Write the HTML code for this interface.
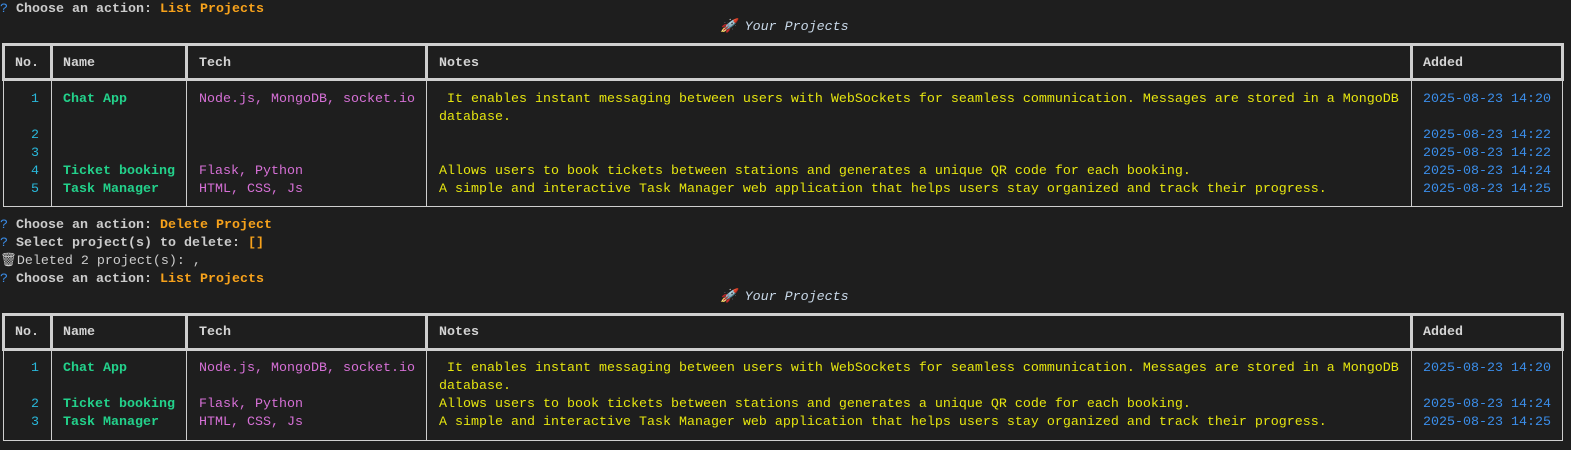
<!DOCTYPE html>
<html><head><meta charset="utf-8"><style>
body{margin:0;background:#1e1e1e;width:1571px;height:450px;overflow:hidden;position:relative;font-family:"Liberation Mono","DejaVu Sans Mono",monospace;font-size:13.33px;line-height:18px;color:#cccccc}
.t{position:absolute;white-space:pre;margin-top:2px}
.b{font-weight:bold}
.q{color:#3b8eea}
.o{color:#f7a21b;font-weight:bold}
.g{color:#23d18b;font-weight:bold}
.m{color:#d670d6}
.y{color:#e5e510}
.d{color:#3b8eea}
.n{color:#29b8db}
.h{font-weight:bold;color:#d4d4d4}
.ti{color:#c8d8e8;font-style:italic}
.hl{position:absolute;background:#cfcfcf}
.ln{position:absolute;background:#cfcfcf}
</style></head><body>

<div class="t" style="top:-1px;left:0"><span class="q">?</span> <span class="b">Choose an action:</span> <span class="o">List Projects</span></div>
<div class="t ti" style="top:17px;left:720px">🚀 Your Projects</div>

<div class="hl" style="left:2px;top:43px;width:1562px;height:3px"></div>
<div class="hl" style="left:2px;top:78px;width:1562px;height:3px"></div>
<div class="hl" style="left:2px;top:43px;width:3px;height:38px"></div>
<div class="hl" style="left:50px;top:43px;width:3px;height:38px"></div>
<div class="hl" style="left:185px;top:43px;width:3px;height:38px"></div>
<div class="hl" style="left:425px;top:43px;width:3px;height:38px"></div>
<div class="hl" style="left:1410px;top:43px;width:3px;height:38px"></div>
<div class="hl" style="left:1561px;top:43px;width:3px;height:38px"></div>
<div class="ln" style="left:3px;top:81px;width:1px;height:126px"></div>
<div class="ln" style="left:51px;top:81px;width:1px;height:126px"></div>
<div class="ln" style="left:186px;top:81px;width:1px;height:126px"></div>
<div class="ln" style="left:426px;top:81px;width:1px;height:126px"></div>
<div class="ln" style="left:1411px;top:81px;width:1px;height:126px"></div>
<div class="ln" style="left:1562px;top:81px;width:1px;height:126px"></div>
<div class="ln" style="left:3px;top:206px;width:1560px;height:1px"></div>

<div class="t h" style="top:53px;left:15px">No.</div>
<div class="t h" style="top:53px;left:63px">Name</div>
<div class="t h" style="top:53px;left:199px">Tech</div>
<div class="t h" style="top:53px;left:439px">Notes</div>
<div class="t h" style="top:53px;left:1423px">Added</div>

<div class="t n" style="top:89px;left:31px">1</div>
<div class="t g" style="top:89px;left:63px">Chat App</div>
<div class="t m" style="top:89px;left:199px">Node.js, MongoDB, socket.io</div>
<div class="t y" style="top:89px;left:439px"> It enables instant messaging between users with WebSockets for seamless communication. Messages are stored in a MongoDB
database.</div>
<div class="t d" style="top:89px;left:1423px">2025-08-23 14:20</div>
<div class="t n" style="top:125px;left:31px">2</div>
<div class="t d" style="top:125px;left:1423px">2025-08-23 14:22</div>
<div class="t n" style="top:143px;left:31px">3</div>
<div class="t d" style="top:143px;left:1423px">2025-08-23 14:22</div>
<div class="t n" style="top:161px;left:31px">4</div>
<div class="t g" style="top:161px;left:63px">Ticket booking</div>
<div class="t m" style="top:161px;left:199px">Flask, Python</div>
<div class="t y" style="top:161px;left:439px">Allows users to book tickets between stations and generates a unique QR code for each booking.</div>
<div class="t d" style="top:161px;left:1423px">2025-08-23 14:24</div>
<div class="t n" style="top:179px;left:31px">5</div>
<div class="t g" style="top:179px;left:63px">Task Manager</div>
<div class="t m" style="top:179px;left:199px">HTML, CSS, Js</div>
<div class="t y" style="top:179px;left:439px">A simple and interactive Task Manager web application that helps users stay organized and track their progress.</div>
<div class="t d" style="top:179px;left:1423px">2025-08-23 14:25</div>

<div class="t" style="top:215px;left:0"><span class="q">?</span> <span class="b">Choose an action:</span> <span class="o">Delete Project</span></div>
<div class="t" style="top:233px;left:0"><span class="q">?</span> <span class="b">Select project(s) to delete:</span> <span class="o">[]</span></div>
<div class="t" style="top:251px;left:0">🗑Deleted 2 project(s): ,</div>
<div class="t" style="top:269px;left:0"><span class="q">?</span> <span class="b">Choose an action:</span> <span class="o">List Projects</span></div>
<div class="t ti" style="top:287px;left:720px">🚀 Your Projects</div>

<div class="hl" style="left:2px;top:313px;width:1562px;height:3px"></div>
<div class="hl" style="left:2px;top:348px;width:1562px;height:3px"></div>
<div class="hl" style="left:2px;top:313px;width:3px;height:38px"></div>
<div class="hl" style="left:50px;top:313px;width:3px;height:38px"></div>
<div class="hl" style="left:185px;top:313px;width:3px;height:38px"></div>
<div class="hl" style="left:425px;top:313px;width:3px;height:38px"></div>
<div class="hl" style="left:1410px;top:313px;width:3px;height:38px"></div>
<div class="hl" style="left:1561px;top:313px;width:3px;height:38px"></div>
<div class="ln" style="left:3px;top:351px;width:1px;height:90px"></div>
<div class="ln" style="left:51px;top:351px;width:1px;height:90px"></div>
<div class="ln" style="left:186px;top:351px;width:1px;height:90px"></div>
<div class="ln" style="left:426px;top:351px;width:1px;height:90px"></div>
<div class="ln" style="left:1411px;top:351px;width:1px;height:90px"></div>
<div class="ln" style="left:1562px;top:351px;width:1px;height:90px"></div>
<div class="ln" style="left:3px;top:440px;width:1560px;height:1px"></div>

<div class="t h" style="top:322px;left:15px">No.</div>
<div class="t h" style="top:322px;left:63px">Name</div>
<div class="t h" style="top:322px;left:199px">Tech</div>
<div class="t h" style="top:322px;left:439px">Notes</div>
<div class="t h" style="top:322px;left:1423px">Added</div>

<div class="t n" style="top:358px;left:31px">1</div>
<div class="t g" style="top:358px;left:63px">Chat App</div>
<div class="t m" style="top:358px;left:199px">Node.js, MongoDB, socket.io</div>
<div class="t y" style="top:358px;left:439px"> It enables instant messaging between users with WebSockets for seamless communication. Messages are stored in a MongoDB
database.</div>
<div class="t d" style="top:358px;left:1423px">2025-08-23 14:20</div>
<div class="t n" style="top:394px;left:31px">2</div>
<div class="t g" style="top:394px;left:63px">Ticket booking</div>
<div class="t m" style="top:394px;left:199px">Flask, Python</div>
<div class="t y" style="top:394px;left:439px">Allows users to book tickets between stations and generates a unique QR code for each booking.</div>
<div class="t d" style="top:394px;left:1423px">2025-08-23 14:24</div>
<div class="t n" style="top:412px;left:31px">3</div>
<div class="t g" style="top:412px;left:63px">Task Manager</div>
<div class="t m" style="top:412px;left:199px">HTML, CSS, Js</div>
<div class="t y" style="top:412px;left:439px">A simple and interactive Task Manager web application that helps users stay organized and track their progress.</div>
<div class="t d" style="top:412px;left:1423px">2025-08-23 14:25</div>
</body></html>
